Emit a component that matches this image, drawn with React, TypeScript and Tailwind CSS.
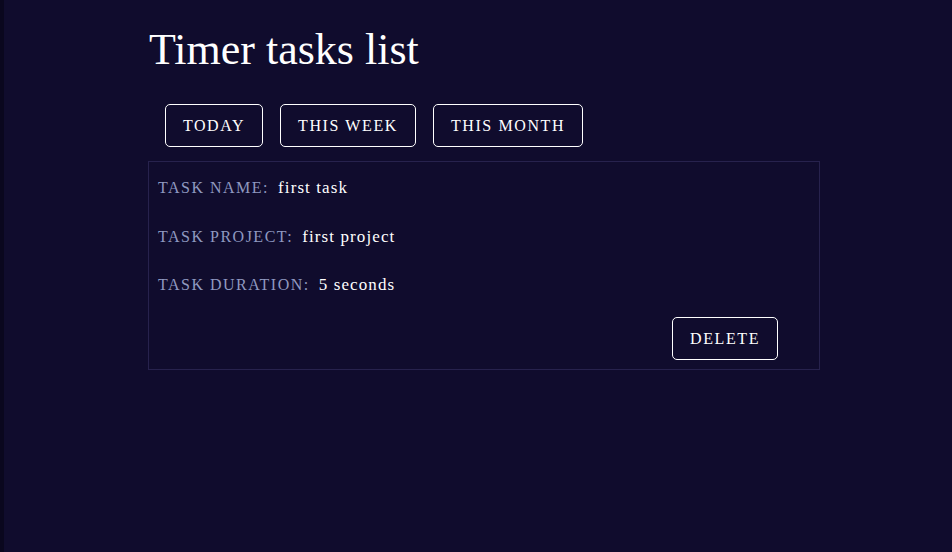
export default function App() {
  const serif = { fontFamily: '"Liberation Serif", "Times New Roman", serif' };
  const btn =
    "h-[43px] border border-white rounded-[5px] text-white text-[16px] uppercase tracking-[1.6px] flex items-center justify-center";
  return (
    <div className="min-h-screen w-full bg-[#100c2d] border-l-4 border-[#0a071e]" style={serif}>
      <div className="ml-[144px] w-[672px] pt-[23px]">
        <h1 className="text-[44px] leading-[53px] text-white font-normal pl-[1px]">Timer tasks list</h1>
        <div className="flex gap-[17px] ml-[17px] mt-[28px]">
          <button className={btn + " w-[98px]"}>Today</button>
          <button className={btn + " w-[136px]"}>This week</button>
          <button className={btn + " w-[150px]"}>This month</button>
        </div>
        <div className="mt-[14px] border border-[#27224d] pt-[14px] pb-[9px] pl-[9px] pr-[41px] flex flex-col">
          <div className="flex flex-col gap-[24.5px] text-[16px] leading-[24px]">
            <div className="flex items-baseline">
              <span className="text-[#8f99c0] tracking-[1.5px]">TASK NAME:</span>
              <span className="text-white ml-[9px] text-[17px] tracking-[1.1px]">first task</span>
            </div>
            <div className="flex items-baseline">
              <span className="text-[#8f99c0] tracking-[1.5px]">TASK PROJECT:</span>
              <span className="text-white ml-[9px] text-[17px] tracking-[1.1px]">first project</span>
            </div>
            <div className="flex items-baseline">
              <span className="text-[#8f99c0] tracking-[1.5px]">TASK DURATION:</span>
              <span className="text-white ml-[9px] text-[17px] tracking-[1.1px]">5 seconds</span>
            </div>
          </div>
          <div className="flex justify-end mt-[20px]">
            <button className={btn + " w-[106px]"}>Delete</button>
          </div>
        </div>
      </div>
    </div>
  );
}
